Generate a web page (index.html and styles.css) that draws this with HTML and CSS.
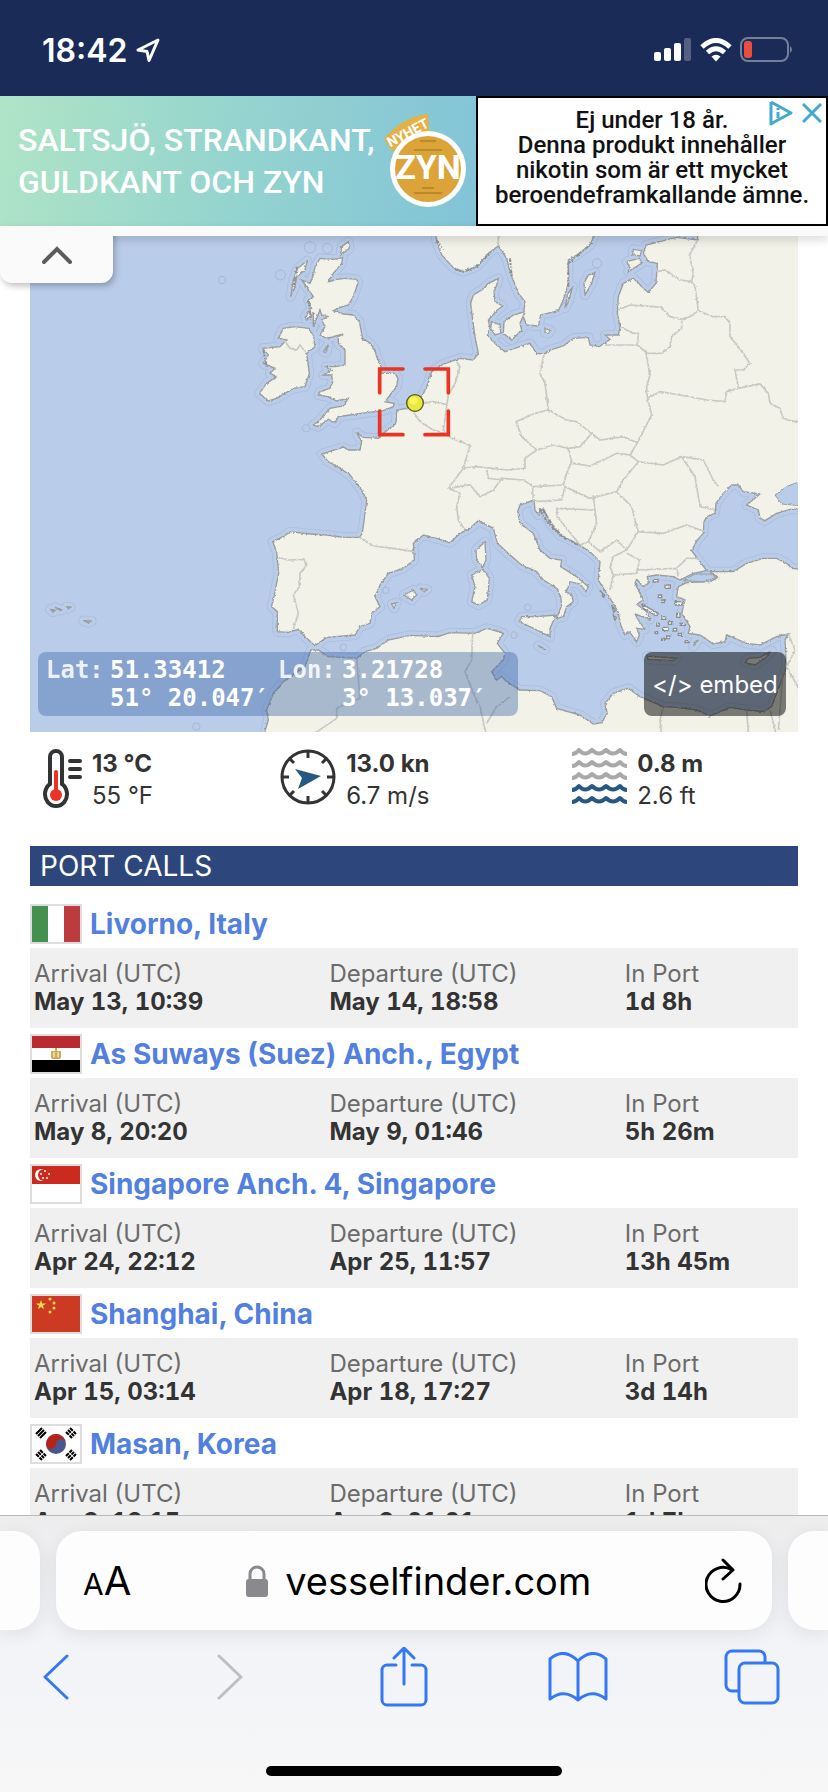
FILE: index.html
```
<!DOCTYPE html>
<html lang="en">
<head>
    <meta charset="UTF-8">
    <meta name="viewport" content="width=device-width, initial-scale=1.0">
    <title>Vessel position and port calls - VesselFinder</title>
    <link rel="stylesheet" href="styles.css">
</head>
<body>

    <!-- Status bar -->
    <header class="status-bar">
        <div class="status-left">
            <span class="clock">18:42</span>
            <svg width="26" height="26" viewBox="0 0 26 26"><path d="M23 3 L3 13 L12 14.500 L14 23.500 Z" fill="none" stroke="#fff" stroke-width="3" stroke-linejoin="round"/></svg>
        </div>
        <div class="status-right">
            <svg width="38" height="24" viewBox="0 0 38 24" fill="#fff">
                <rect x="0" y="14" width="7" height="9" rx="2"/>
                <rect x="10" y="10" width="7" height="13" rx="2"/>
                <rect x="20" y="5" width="7" height="18" rx="2"/>
                <rect x="30" y="0" width="7" height="23" rx="2" opacity=".25"/>
            </svg>
            <svg width="32" height="24" viewBox="0 0 32 24" fill="none" stroke="#fff" stroke-width="5">
                <path d="M2 9 Q16 -4 30 9"/>
                <path d="M7.500 14.500 Q16 7 24.500 14.500"/>
                <path d="M11.500 18.500 Q16 15 20.500 18.500 L16 23.500 Z" fill="#fff" stroke="none"/>
            </svg>
            <svg width="54" height="26" viewBox="0 0 54 26">
                <rect x="1" y="1" width="47" height="23" rx="7" fill="none" stroke="#fff" stroke-opacity=".4" stroke-width="2"/>
                <rect x="4" y="4" width="8" height="17" rx="3" fill="#ea4e3d"/>
                <path d="M50 9 Q54 12.500 50 16 Z" fill="#fff" fill-opacity=".4"/>
            </svg>
        </div>
    </header>

    <!-- Advert -->
    <aside class="ad">
        <div class="ad-left">
            <p>SALTSJÖ, STRANDKANT,<br>GULDKANT OCH ZYN</p>
            <svg class="can" width="88" height="96" viewBox="0 0 88 96">
                <path d="M4 26 Q22 4 48 1 L50 32 L12 38 Z" fill="#e5b044"/>
                <text x="30" y="24" class="can-tag" transform="rotate(-28 30 24)">NYHET</text>
                <circle cx="48" cy="56" r="38" fill="#fff"/>
                <circle cx="48" cy="56" r="33" fill="#dca338"/>
                <path d="M34 37 H62 M40 28 H56 M42 75 H54 M34 80 H62" stroke="#b98a2c" stroke-width="2"/>
                <text x="48" y="66" class="can-name">ZYN</text>
            </svg>
        </div>
        <div class="ad-right">
            <p>Ej under 18 år.<br>Denna produkt innehåller<br>nikotin som är ett mycket<br>beroendeframkallande ämne.</p>
            <div class="ad-marks">
                <svg width="24" height="26" viewBox="0 0 24 26" fill="none" stroke="#43a9ce" stroke-width="3" stroke-linejoin="round"><path d="M2 2 L22 13 L7 21 M2 2 V24 L7 21"/><path d="M9 8 V10 M9 12 V18"/></svg>
                <svg width="20" height="20" viewBox="0 0 20 20" stroke="#43a9ce" stroke-width="3"><path d="M1 1 L19 19 M19 1 L1 19"/></svg>
            </div>
        </div>
    </aside>

    <div class="ad-edge">
        <button class="ad-toggle" aria-label="Hide advert">
            <svg width="30" height="18" viewBox="0 0 30 18"><path d="M2 16 L15 3 L28 16" fill="none" stroke="#5c5c5c" stroke-width="4" stroke-linecap="round"/></svg>
        </button>
    </div>

    <main class="page">

        <!-- Map -->
        <div class="map">
            <svg class="map-art" viewBox="90 708 2304 1488" preserveAspectRatio="xMidYMid slice">
                <defs>
                    <filter id="rough" x="0" y="0" width="1" height="1">
                        <feTurbulence type="fractalNoise" baseFrequency=".12" numOctaves="3" seed="4"/>
                        <feDisplacementMap in="SourceGraphic" scale="8" xChannelSelector="R" yChannelSelector="G"/>
                    </filter>
                    <g id="land">
                        <!-- Europe -->
                        <path d="M2093 690 L2093 720 L2030 712 L1980 725 L1938 735 L1930 760 L1945 785 L1972 790 L1968 850 L1945 878 L1930 865 L1900 835 L1870 850 L1855 890 L1852 940 L1860 980 L1855 1005 L1815 1005 L1830 1018 L1798 1040 L1770 1035 L1765 1012 L1720 1015 L1690 1038 L1650 1050 L1632 1062 L1610 1060 L1590 1030 L1560 1040 L1515 1055 L1490 1035 L1462 1005 L1470 985 L1465 960 L1492 930 L1508 918 L1485 905 L1482 875 L1492 850 L1495 835 L1470 848 L1445 870 L1420 885 L1412 910 L1418 960 L1425 1010 L1435 1060 L1420 1080 L1380 1075 L1330 1092 L1295 1115 L1285 1150 L1268 1185 L1220 1225 L1190 1230 L1188 1270 L1150 1300 L1135 1315 L1090 1312 L1070 1298 L1085 1325 L1080 1350 L1045 1350 L1030 1341 L965 1362 L985 1385 L1020 1405 L1050 1425 L1070 1450 L1085 1470 L1100 1500 L1095 1540 L1087 1600 L1078 1612 L1030 1612 L980 1605 L930 1602 L870 1595 L850 1610 L818 1625 L830 1655 L836 1720 L822 1790 L815 1820 L832 1835 L832 1895 L865 1897 L895 1888 L915 1910 L945 1937 L980 1912 L1065 1905 L1080 1880 L1110 1870 L1115 1840 L1140 1820 L1125 1790 L1140 1755 L1165 1720 L1210 1705 L1243 1680 L1240 1630 L1270 1605 L1310 1615 L1350 1628 L1380 1600 L1410 1585 L1435 1562 L1480 1585 L1492 1630 L1530 1665 L1565 1695 L1610 1715 L1630 1740 L1670 1765 L1682 1790 L1685 1815 L1670 1855 L1690 1850 L1700 1820 L1720 1805 L1715 1785 L1698 1775 L1710 1745 L1740 1752 L1758 1775 L1765 1760 L1730 1730 L1682 1700 L1685 1680 L1650 1675 L1620 1650 L1600 1600 L1560 1570 L1553 1535 L1560 1515 L1602 1500 L1605 1530 L1615 1545 L1630 1525 L1650 1570 L1680 1605 L1730 1630 L1770 1655 L1800 1685 L1795 1740 L1820 1780 L1840 1810 L1855 1838 L1862 1875 L1875 1905 L1888 1895 L1910 1925 L1918 1905 L1910 1885 L1935 1888 L1915 1860 L1905 1842 L1950 1858 L1940 1835 L1910 1812 L1930 1800 L1920 1780 L1905 1750 L1910 1738 L1930 1760 L1945 1750 L1942 1730 L1970 1725 L2020 1730 L2040 1740 L2080 1720 L2120 1712 L2092 1675 L2075 1652 L2092 1620 L2110 1600 L2112 1565 L2120 1550 L2145 1540 L2148 1510 L2170 1480 L2195 1455 L2215 1455 L2230 1475 L2280 1482 L2240 1515 L2275 1530 L2280 1555 L2295 1562 L2330 1540 L2370 1528 L2410 1528 L2410 690 Z"/>
                        <!-- Scandinavia -->
                        <path d="M1305 690 L1310 725 L1325 765 L1360 803 L1390 815 L1430 800 L1465 760 L1495 738 L1520 775 L1530 815 L1555 880 L1575 905 L1570 950 L1580 975 L1615 978 L1622 945 L1675 932 L1690 900 L1705 850 L1705 780 L1730 765 L1770 735 L1790 690 Z"/>
                        <!-- Turkey and North Africa -->
                        <path d="M2410 1708 L2375 1705 L2360 1690 L2330 1675 L2290 1675 L2240 1690 L2200 1715 L2130 1715 L2155 1733 L2130 1745 L2060 1748 L2035 1760 L2030 1790 L2055 1800 L2045 1840 L2070 1880 L2065 1900 L2100 1905 L2140 1932 L2175 1925 L2180 1905 L2240 1930 L2280 1935 L2330 1910 L2365 1902 L2355 1920 L2358 1980 L2360 2000 L2330 2080 L2315 2120 L2290 2135 L2240 2130 L2190 2122 L2130 2148 L2090 2130 L2030 2122 L1990 2120 L1920 2090 L1885 2065 L1840 2080 L1815 2110 L1822 2140 L1805 2168 L1780 2172 L1740 2145 L1670 2125 L1655 2090 L1620 2072 L1560 2070 L1520 2045 L1505 2030 L1490 2040 L1475 2015 L1510 1980 L1515 1960 L1492 1930 L1510 1900 L1480 1890 L1460 1885 L1425 1900 L1350 1898 L1315 1910 L1230 1906 L1165 1920 L1130 1945 L1095 1955 L1070 1975 L985 1970 L955 1950 L932 1950 L915 2000 L850 2045 L820 2080 L800 2130 L805 2160 L790 2210 L2410 2210 Z"/>
                        <!-- Great Britain and Ireland -->
                        <path d="M960 775 L1000 778 L1028 773 L1025 790 L1000 820 L985 845 L1010 838 L1040 835 L1070 838 L1074 848 L1060 890 L1045 915 L1020 922 L1000 932 L1030 942 L1060 945 L1078 965 L1088 1015 L1110 1030 L1125 1050 L1130 1070 L1142 1095 L1145 1120 L1185 1120 L1194 1135 L1190 1160 L1170 1185 L1155 1205 L1182 1210 L1180 1220 L1150 1232 L1100 1238 L1050 1245 L1015 1250 L1005 1268 L985 1258 L955 1280 L940 1275 L960 1260 L990 1225 L1030 1218 L1045 1195 L1010 1203 L985 1190 L955 1185 L960 1175 L990 1165 L998 1145 L995 1125 L970 1125 L995 1110 L978 1100 L1005 1100 L1035 1095 L1035 1050 L1015 1030 L1015 1010 L1030 1002 L980 1015 L960 1005 L975 980 L965 960 L985 950 L965 945 L960 930 L940 980 L940 940 L920 960 L915 950 L935 925 L925 900 L940 890 L905 840 L930 850 L940 825 L945 800 Z"/>
                        <path d="M925 985 L940 1005 L945 1040 L920 1060 L928 1120 L915 1160 L880 1165 L830 1195 L805 1203 L778 1180 L800 1150 L830 1130 L810 1120 L825 1105 L790 1090 L805 1065 L788 1045 L840 1040 L860 1020 L835 1015 L850 985 L885 980 Z"/>
                        <!-- Islands -->
                        <path d="M922 782 L915 810 L890 830 L885 860 L872 890 L880 840 L893 805 Z"/>
                        <path d="M1045 725 L1048 745 L1022 765 L1025 740 Z"/>
                        <path d="M985 1035 L978 1058 L970 1055 Z"/>
                        <path d="M1575 935 L1560 970 L1565 990 L1535 1020 L1510 1000 L1512 965 L1540 945 Z"/>
                        <path d="M1475 965 L1500 975 L1502 1000 L1485 1005 L1472 985 Z"/>
                        <path d="M1635 985 L1652 992 L1645 1000 L1635 998 Z"/>
                        <path d="M1785 818 L1775 850 L1755 885 L1752 850 L1765 825 Z"/>
                        <path d="M1718 860 L1705 905 L1695 925 L1702 885 Z"/>
                        <path d="M1900 748 L1925 752 L1920 768 L1898 765 Z"/>
                        <path d="M1880 785 L1918 775 L1925 790 L1885 815 L1888 800 Z"/>
                        <path d="M1455 1625 L1458 1680 L1448 1702 L1430 1680 L1428 1650 Z"/>
                        <path d="M1450 1708 L1468 1735 L1462 1800 L1435 1815 L1415 1805 L1425 1760 L1415 1725 Z"/>
                        <path d="M1668 1845 L1650 1885 L1650 1910 L1600 1885 L1558 1865 L1565 1850 L1610 1850 Z"/>
                        <path d="M1212 1785 L1240 1770 L1250 1785 L1235 1800 Z"/>
                        <path d="M1175 1812 L1190 1808 L1182 1825 Z"/>
                        <path d="M1262 1765 L1282 1768 L1272 1775 Z"/>
                        <path d="M1940 1968 L2030 1975 L2020 1982 L1945 1978 Z"/>
                        <path d="M2315 1952 L2295 1975 L2265 1995 L2235 1988 L2245 1975 L2280 1972 Z"/>
                        <path d="M1615 1937 L1630 1945 L1635 1950 Z"/>
                        <path d="M2095 1920 L2080 1940 L2085 1925 Z"/>
                        <path d="M250 1862 L275 1863 L265 1868 Z M150 1828 L165 1832 L160 1836 Z M200 1820 L212 1822 L206 1826 Z M165 1822 L185 1830 L180 1832 Z"/>
                    </g>
                </defs>
                <rect x="90" y="708" width="2304" height="1488" fill="#b9cce9"/>
                <use href="#land" fill="none" stroke="#adbdd9" stroke-width="30" stroke-linejoin="round"/>
                <use href="#land" fill="none" stroke="#b9cce9" stroke-width="25" stroke-linejoin="round"/>
                <g filter="url(#rough)">
                    <use href="#land" fill="#f2f2e9" stroke="#9a9c9e" stroke-width="4"/>
                    <g fill="#b9cce9" stroke="#9a9c9e" stroke-width="3">
                        <!-- Azov and Marmara -->
                        <path d="M2410 1440 L2360 1460 L2325 1485 L2345 1512 L2410 1518 Z"/>
                        <path d="M2050 1742 L2085 1722 L2130 1722 L2150 1732 L2110 1745 Z"/>
                    </g>
                    <!-- Borders -->
                    <g fill="none" stroke="#c9c9c4" stroke-width="5">
                        <path d="M852 1020 L870 1045 L890 1050 L900 1035 L915 1055"/>
                        <path d="M1495 690 L1495 738"/>
                        <path d="M1970 815 L1995 810 L2040 840 L2075 845 L2080 820 L2068 765 L2093 720"/>
                        <path d="M1855 930 L1890 915 L1960 920 L1985 922 L2010 950 L2045 958 L2070 950 L2095 932 L2085 860 L2070 840"/>
                        <path d="M1860 980 L1900 1000 L1915 1000 L1912 1035 L1815 1035 M1912 1035 L1942 1060 L1985 1060 L2010 1040 L2015 1010 L2045 985 L2045 958"/>
                        <path d="M2095 932 L2140 950 L2175 950 L2190 970 L2190 1010 L2215 1040 L2250 1090 L2230 1110 L2205 1110 L2215 1165 L2180 1175 L2175 1205 L2120 1200 L2040 1185 L1980 1175 L1942 1195 L1940 1160 L1950 1125 L1938 1060"/>
                        <path d="M2215 1165 L2280 1152 L2305 1180 L2310 1210 L2340 1225 L2350 1255 L2380 1265 L2410 1262"/>
                        <path d="M1632 1062 L1620 1120 L1635 1150 L1645 1230 L1700 1260 L1730 1265 L1775 1300 L1800 1320 L1870 1310 L1912 1328 L1955 1245 L1942 1195"/>
                        <path d="M1645 1230 L1605 1240 L1548 1265 L1565 1310 L1610 1350 L1660 1335 L1705 1345 L1740 1340 L1775 1300"/>
                        <path d="M1610 1350 L1575 1375 L1575 1405 L1520 1410 L1430 1400 L1390 1405 L1410 1335 L1355 1315 L1330 1290 L1345 1185 L1365 1150 L1380 1100 L1370 1085"/>
                        <path d="M1230 1220 L1260 1265 L1300 1290 L1335 1300 M1268 1210 L1300 1205 L1345 1215"/>
                        <path d="M1390 1405 L1345 1465 L1380 1480 L1370 1520 L1375 1560 L1395 1590"/>
                        <path d="M1345 1465 L1410 1455 L1440 1490 L1480 1470 L1505 1435 L1570 1440 L1600 1460 L1690 1455 L1700 1420 L1715 1385 L1705 1345 M1460 1410 L1465 1435 L1510 1440"/>
                        <path d="M1718 1390 L1770 1398 L1820 1375 L1850 1360 L1890 1365 L1915 1385 L1870 1440 L1850 1475 L1770 1495 L1695 1460 L1685 1500 L1600 1505 L1598 1460 M1890 1365 L1912 1328"/>
                        <path d="M1915 1385 L1990 1395 L2045 1370 L2085 1430 L2100 1520 L2145 1530 M2045 1370 L2110 1380 L2140 1440 L2155 1460"/>
                        <path d="M1850 1475 L1895 1520 L1910 1580 L1915 1595 L1990 1600 L2060 1575 L2115 1595"/>
                        <path d="M1670 1525 L1785 1530 L1790 1570 L1765 1625 L1740 1635 L1672 1550 Z M1785 1530 L1780 1485"/>
                        <path d="M1765 1625 L1800 1655 L1850 1620 L1880 1650 L1840 1670 L1830 1700 L1840 1725 L1910 1720 L1918 1680 L1880 1660 M1915 1595 L1880 1650 M1840 1725 L1830 1770 M1910 1710 L2030 1705 L2060 1675 L2092 1675 M2030 1705 L2035 1730"/>
                        <path d="M1078 1612 L1120 1638 L1180 1645 L1243 1655"/>
                        <path d="M836 1672 L865 1680 L910 1678 L920 1695 L900 1720 L898 1760 L880 1785 L895 1840 L880 1888"/>
                        <path d="M1070 1975 L1080 2095 L1010 2125 L1010 2155 L950 2196"/>
                        <path d="M1418 1900 L1415 1980 L1395 2015 L1420 2080 L1440 2120 L1460 2210 M1460 2170 L1490 2120 L1530 2090"/>
                        <path d="M1990 2120 L1980 2160 L1985 2210 M2310 2130 L2330 2210 M2350 2000 L2335 2190 M2240 2130 L2245 2196 M2365 1902 L2385 1950 L2360 2000 L2410 2090"/>
                    </g>
                    <!-- Islets off Croatia, in the Aegean and by the Swedish skerries -->
                    <g fill="none" stroke="#8c8e90" stroke-width="6" stroke-dasharray="11 3 6 4 3 7">
                        <path d="M1618 1525 L1640 1565 L1680 1605 L1740 1638 M1630 1530 L1660 1580 L1700 1620"/>
                        <path d="M1530 775 L1535 830 M1705 860 L1705 790 L1735 765 L1775 730 M1310 720 L1330 750 M1365 808 L1390 815 L1430 800 L1480 750"/>
                        <path d="M925 900 L935 970 M890 800 L880 870 M790 1050 L800 1100"/>
                    </g>
                    <g fill="#f2f2e9" stroke="#8c8e90" stroke-width="4">
                        <path d="M1960 1738 h14 v8 h-14 Z M1995 1755 h16 v10 h-16 Z M1975 1785 h10 v8 h-10 Z M2025 1805 h22 v10 h-20 Z M2030 1840 h10 v12 h-10 Z M1985 1800 h8 v8 h-8 Z"/>
                        <path d="M1925 1812 L1975 1840 L1970 1848 L1930 1825 Z M1985 1850 h12 v8 h-12 Z M2005 1865 h10 v8 h-10 Z M1970 1870 h8 v8 h-8 Z M1990 1882 h14 v10 h-14 Z M2020 1885 h10 v8 h-10 Z M1965 1895 h8 v6 h-8 Z"/>
                        <path d="M2000 1908 h10 v8 h-10 Z M2035 1900 h12 v6 h-12 Z M1985 1915 h8 v6 h-8 Z M2040 1870 h16 v6 h-16 Z M2055 1922 h10 v6 h-10 Z M1835 1815 l12 16 l-6 6 Z M1840 1845 l10 8 l-6 6 Z M1800 1772 l14 14 l-4 6 Z"/>
                    </g>
                </g>
                <!-- Islands' offshore rings -->
                <g fill="none" stroke="#a9b9d3" stroke-width="3">
                    <circle cx="666" cy="840" r="11"/><circle cx="841" cy="825" r="15"/><circle cx="930" cy="742" r="17"/><circle cx="982" cy="745" r="15"/>
                    <circle cx="918" cy="1285" r="11"/><circle cx="1157" cy="1771" r="10"/><circle cx="1030" cy="1942" r="10"/><circle cx="589" cy="2180" r="11"/>
                    <circle cx="1583" cy="1822" r="10"/><circle cx="1791" cy="790" r="14"/><circle cx="1542" cy="1905" r="10"/>
                </g>
                <!-- Vessel marker -->
                <path d="M1209 1107 H1139 V1178 M1139 1233 V1304 H1209 M1275 1107 H1345 V1178 M1345 1233 V1304 H1275" fill="none" stroke="#ea3323" stroke-width="11" stroke-linecap="round"/>
                <circle cx="1245" cy="1209" r="25" fill="#e8e840" stroke="#55551c" stroke-width="4"/>
                <circle cx="1240" cy="1202" r="12" fill="#f7f75c"/>
            </svg>

            <div class="coords">
                <span class="coord-name">Lat:</span>
                <span>51.33412<br>51° 20.047′</span>
                <span class="coord-name">Lon:</span>
                <span>3.21728<br>3° 13.037′</span>
            </div>
            <button class="embed">&lt;/&gt; embed</button>
        </div>

        <!-- Weather -->
        <div class="weather">
            <div class="weather-item">
                <svg width="42" height="62" viewBox="0 0 42 62">
                    <path d="M8 9 a6 6 0 0 1 12 0 V36 a11 12 0 1 1 -12 0 Z" fill="#fff" stroke="#313335" stroke-width="4"/>
                    <path d="M14 24 V46" stroke="#ea3323" stroke-width="4" stroke-linecap="round"/>
                    <circle cx="14" cy="47" r="6" fill="#ea3323"/>
                    <path d="M28 13 H38 M28 21 H38 M28 29 H38" stroke="#313335" stroke-width="4" stroke-linecap="round"/>
                </svg>
                <p><b>13 °C</b><br>55 °F</p>
            </div>
            <div class="weather-item">
                <svg width="58" height="62" viewBox="0 0 58 62">
                    <circle cx="28" cy="29" r="26" fill="none" stroke="#313335" stroke-width="3"/>
                    <path d="M28 3 V10 M28 48 V55 M2 29 H9 M47 29 H54 M10 11 L14 15 M42 43 L46 47 M46 11 L42 15 M14 43 L10 47" stroke="#313335" stroke-width="3"/>
                    <path d="M15 21 L41 28 L18 41 L22 30 Z" fill="#265882"/>
                </svg>
                <p><b>13.0 kn</b><br>6.7 m/s</p>
            </div>
            <div class="weather-item">
                <svg width="58" height="62" viewBox="0 0 58 62" fill="none" stroke="#a9a9a9" stroke-width="4" stroke-linejoin="round">
                    <path id="wave" d="M1 6 Q5 6 8 2 Q14 9 21 2 Q28 9 35 2 Q42 9 49 2 Q52 6 56 6"/>
                    <use href="#wave" y="12"/>
                    <use href="#wave" y="24"/>
                    <g stroke="#265882"><use href="#wave" y="36"/><use href="#wave" y="48"/></g>
                </svg>
                <p><b>0.8 m</b><br>2.6 ft</p>
            </div>
        </div>

        <!-- Port calls -->
        <h2>PORT CALLS</h2>
        <section class="calls">
            <article class="call">
                <h3>
                    <svg class="flag" viewBox="0 0 48 36"><path fill="#fff" d="M0 0H48V36H0Z"/><path fill="#45904f" d="M0 0H16V36H0Z"/><path fill="#bb3b3e" d="M32 0H48V36H32Z"/></svg>
                    <a href="#">Livorno, Italy</a>
                </h3>
                <dl>
                    <div><dt>Arrival (UTC)</dt><dd>May 13, 10:39</dd></div>
                    <div><dt>Departure (UTC)</dt><dd>May 14, 18:58</dd></div>
                    <div><dt>In Port</dt><dd>1d 8h</dd></div>
                </dl>
            </article>
            <article class="call">
                <h3>
                    <svg class="flag" viewBox="0 0 48 36"><path fill="#fff" d="M0 0H48V36H0Z"/><path fill="#ba2b31" d="M0 0H48V12H0Z"/><path d="M0 24H48V36H0Z"/><path fill="#cfae53" d="M23 12h2v3h4v6l-1 2H20l-1-2v-6h4Z"/><path stroke="#fff" stroke-width="1" d="M22 16v5M26 16v5"/></svg>
                    <a href="#">As Suways (Suez) Anch., Egypt</a>
                </h3>
                <dl>
                    <div><dt>Arrival (UTC)</dt><dd>May 8, 20:20</dd></div>
                    <div><dt>Departure (UTC)</dt><dd>May 9, 01:46</dd></div>
                    <div><dt>In Port</dt><dd>5h 26m</dd></div>
                </dl>
            </article>
            <article class="call">
                <h3>
                    <svg class="flag" viewBox="0 0 48 36"><path fill="#fff" d="M0 0H48V36H0Z"/><path fill="#cb2b1e" d="M0 0H48V18H0Z"/><circle cx="9" cy="9" r="6" fill="#fff"/><circle cx="12" cy="9" r="6" fill="#cb2b1e"/><g fill="#fff"><circle cx="13" cy="5" r="1"/><circle cx="9" cy="8" r="1"/><circle cx="17" cy="8" r="1"/><circle cx="11" cy="12" r="1"/><circle cx="15" cy="12" r="1"/></g></svg>
                    <a href="#">Singapore Anch. 4, Singapore</a>
                </h3>
                <dl>
                    <div><dt>Arrival (UTC)</dt><dd>Apr 24, 22:12</dd></div>
                    <div><dt>Departure (UTC)</dt><dd>Apr 25, 11:57</dd></div>
                    <div><dt>In Port</dt><dd>13h 45m</dd></div>
                </dl>
            </article>
            <article class="call">
                <h3>
                    <svg class="flag" viewBox="0 0 48 36"><path fill="#cc3a24" d="M0 0H48V36H0Z"/><g fill="#f9dc4b"><path d="M9 4l1.200 3.500h3.800l-3 2.200 1.100 3.600L9 11.100l-3.100 2.200L7 9.700 4 7.500h3.800Z"/><circle cx="18" cy="3" r="1.500"/><circle cx="22" cy="7" r="1.500"/><circle cx="22" cy="12" r="1.500"/><circle cx="18" cy="16" r="1.500"/></g></svg>
                    <a href="#">Shanghai, China</a>
                </h3>
                <dl>
                    <div><dt>Arrival (UTC)</dt><dd>Apr 15, 03:14</dd></div>
                    <div><dt>Departure (UTC)</dt><dd>Apr 18, 17:27</dd></div>
                    <div><dt>In Port</dt><dd>3d 14h</dd></div>
                </dl>
            </article>
            <article class="call">
                <h3>
                    <svg class="flag" viewBox="0 0 48 36"><path fill="#fff" d="M0 0H48V36H0Z"/><circle cx="24" cy="18" r="10" fill="#47568f"/><path fill="#b82318" d="M14 18a10 10 0 0 1 20 0a5 5 0 0 0-10 0a5 5 0 0 1-10 0Z"/><g stroke="#000" stroke-width="2"><path d="M4 8l6-6M6 10l6-6M8 12l6-6"/><path stroke-dasharray="4 1" d="M34 6l6 6M36 4l6 6M38 2l6 6"/><path stroke-dasharray="4 1" d="M4 28l6 6M6 26l6 6M8 24l6 6"/><path stroke-dasharray="4 1" d="M34 30l6-6M36 32l6-6M38 34l6-6"/></g></svg>
                    <a href="#">Masan, Korea</a>
                </h3>
                <dl>
                    <div><dt>Arrival (UTC)</dt><dd>Apr 2, 19:15</dd></div>
                    <div><dt>Departure (UTC)</dt><dd>Apr 9, 01:01</dd></div>
                    <div><dt>In Port</dt><dd>1d 7h</dd></div>
                </dl>
            </article>
        </section>
    </main>

    <!-- Browser controls -->
    <footer class="browser">
        <div class="tabs">
            <div class="tab-peek"></div>
            <div class="address">
                <button class="text-size" aria-label="Page settings"><small>A</small>A</button>
                <div class="site">
                    <svg width="24" height="34" viewBox="0 0 24 34"><path d="M5 17 V10 a7 7 0 0 1 14 0 V17" fill="none" stroke="#8a8a8e" stroke-width="3"/><rect x="1" y="15" width="22" height="18" rx="3" fill="#8a8a8e"/></svg>
                    <span>vesselfinder.com</span>
                </div>
                <button aria-label="Reload">
                    <svg width="38" height="46" viewBox="0 0 38 46" fill="none" stroke="#000" stroke-width="3" stroke-linecap="round" stroke-linejoin="round"><path d="M35 26 A17 17 0 1 1 27 12"/><path d="M18 2 L28 12 L18 21"/></svg>
                </button>
            </div>
            <div class="tab-peek"></div>
        </div>
        <nav class="toolbar">
            <button aria-label="Back"><svg width="28" height="46" viewBox="0 0 28 46"><path d="M25 2 L3 23 L25 44"/></svg></button>
            <button aria-label="Forward" disabled><svg width="28" height="46" viewBox="0 0 28 46"><path d="M3 2 L25 23 L3 44"/></svg></button>
            <button aria-label="Share"><svg width="48" height="60" viewBox="0 0 48 60"><path d="M16 18 H7 a5 5 0 0 0 -5 5 V53 a5 5 0 0 0 5 5 H41 a5 5 0 0 0 5 -5 V23 a5 5 0 0 0 -5 -5 H32 M24 37 V2 M14 11 L24 1 L34 11"/></svg></button>
            <button aria-label="Bookmarks"><svg width="60" height="50" viewBox="0 0 60 50"><path d="M30 9 Q16 -5 2 7 V47 Q16 36 30 48 Q44 36 58 47 V7 Q44 -5 30 9 V48"/></svg></button>
            <button aria-label="Tabs"><svg width="56" height="56" viewBox="0 0 56 56"><rect x="15" y="14" width="39" height="40" rx="6"/><path d="M14 42 H8 a6 6 0 0 1 -6 -6 V8 a6 6 0 0 1 6 -6 H35 a6 6 0 0 1 6 6 V13"/></svg></button>
        </nav>
        <div class="home-bar"></div>
    </footer>

</body>
</html>
```

FILE: styles.css
```
* {
    box-sizing: border-box;
}
body {
    font-family: Inter, "Liberation Sans", sans-serif;
    margin: 0;
    height: 100vh;
    display: flex;
    flex-direction: column;
    overflow: hidden;
    background-color: #fff;
    color: #333;
}
p, h2, h3, dl, dd {
    margin: 0;
}
button {
    font-family: inherit;
    border: none;
    background: none;
    padding: 0;
    cursor: pointer;
}
svg {
    display: block;
    flex-shrink: 0;
}
/* Status bar */
.status-bar {
    display: flex;
    flex-shrink: 0;
    justify-content: space-between;
    align-items: center;
    height: 96px;
    padding: 4px 34px 0 42px;
    background-color: #1a2b57;
    color: #fff;
}
.status-left, .status-right {
    display: flex;
    align-items: center;
    gap: 8px;
}
.clock {
    font-size: 32px;
    font-weight: 600;
}
/* Advert */
.ad {
    display: flex;
    flex-shrink: 0;
    height: 130px;
    font-family: "Liberation Sans Narrow", Roboto, sans-serif;
}
.ad-left {
    display: flex;
    align-items: center;
    justify-content: space-between;
    width: 476px;
    padding: 0 8px 0 18px;
    background: linear-gradient(100deg, #afe4c6, #94d4cf 50%, #82c3d8);
    color: #fff;
    font-size: 32px;
    font-weight: 500;
    line-height: 42px;
    white-space: nowrap;
}
.can-tag {
    font: bold 14px Roboto, sans-serif;
    fill: #fff;
    text-anchor: middle;
}
.can-name {
    font: bold 34px Roboto, sans-serif;
    fill: #fff;
    text-anchor: middle;
}
.ad-right {
    position: relative;
    flex: 1;
    padding-top: 10px;
    border: 2px solid #000;
    background-color: #fff;
    color: #111;
    font-size: 24px;
    font-weight: 500;
    line-height: 25px;
    text-align: center;
    white-space: nowrap;
}
.ad-marks {
    position: absolute;
    top: 2px;
    right: 4px;
    display: flex;
    align-items: center;
    gap: 9px;
}
.ad-edge {
    position: relative;
    z-index: 2;
    flex-shrink: 0;
    height: 10px;
    background-color: #fafafa;
    box-shadow: 0 4px 10px rgba(0, 0, 0, 0.15);
}
.ad-toggle {
    position: absolute;
    top: 0;
    left: 0;
    display: flex;
    align-items: center;
    justify-content: center;
    width: 113px;
    height: 57px;
    border-radius: 0 0 12px 12px;
    background-color: #fafafa;
    box-shadow: 2px 3px 6px rgba(0, 0, 0, 0.25);
    clip-path: inset(10px -10px -10px 0);
}
/* Page */
.page {
    flex: 1;
    min-height: 0;
    overflow: hidden;
    padding: 0 30px;
}
.map {
    position: relative;
    height: 496px;
    overflow: hidden;
}
.map-art {
    width: 100%;
    height: 100%;
}
.coords {
    position: absolute;
    left: 8px;
    bottom: 16px;
    display: grid;
    grid-template-columns: 64px 168px 64px auto;
    width: 480px;
    height: 64px;
    padding: 4px 8px;
    border-radius: 8px;
    background-color: rgba(58, 101, 165, 0.4);
    color: #fff;
    font: bold 24px/28px "DejaVu Sans Mono", monospace;
    white-space: nowrap;
}
.coord-name {
    opacity: 0.85;
}
.embed {
    position: absolute;
    right: 12px;
    bottom: 16px;
    width: 142px;
    height: 64px;
    border-radius: 8px;
    background-color: rgba(0, 0, 0, 0.5);
    color: #fff;
    font-size: 24px;
}
/* Weather */
.weather {
    display: grid;
    grid-template-columns: 63fr 77fr 60fr;
    height: 114px;
    padding: 16px 0 0 12px;
    font-size: 24px;
    line-height: 32px;
}
.weather-item {
    display: flex;
    gap: 8px;
}
/* Port calls */
h2 {
    height: 40px;
    padding-left: 10px;
    background-color: #2d477d;
    color: #fff;
    font-size: 28px;
    font-weight: 400;
    line-height: 40px;
}
.calls {
    padding-top: 12px;
}
h3 {
    display: flex;
    align-items: center;
    gap: 8px;
    height: 50px;
    padding-top: 2px;
    font-size: 28px;
    font-weight: 700;
}
h3 a {
    color: #5280df;
    text-decoration: none;
}
.flag {
    width: 52px;
    height: 40px;
    border: 2px solid #ddd;
}
dl {
    display: grid;
    grid-template-columns: 5fr 5fr 3fr;
    height: 80px;
    padding-top: 12px;
    background-color: #f0f0f0;
    font-size: 24px;
    line-height: 28px;
}
dl div {
    padding-left: 4px;
}
dt {
    color: #6b6b6b;
}
dd {
    font-weight: 700;
    font-variant-numeric: tabular-nums;
}
/* Browser controls */
.browser {
    flex-shrink: 0;
    height: 277px;
    border-top: 1px solid #b8b9bb;
    background: linear-gradient(#ededee, #f2f4f8 50%, #f7f7f7);
}
.tabs {
    display: flex;
    gap: 16px;
    padding-top: 15px;
}
.tab-peek, .address {
    height: 99px;
    background-color: #fdfdfe;
    box-shadow: 0 4px 20px rgba(0, 0, 0, 0.08);
}
.tab-peek {
    width: 40px;
    border-radius: 0 26px 26px 0;
}
.tab-peek:last-child {
    border-radius: 26px 0 0 26px;
}
.address {
    flex: 1;
    display: flex;
    align-items: center;
    justify-content: space-between;
    padding: 0 29px 0 27px;
    border-radius: 26px;
    color: #000;
}
.text-size {
    color: #000;
    font-size: 40px;
}
.text-size small {
    font-size: 30px;
}
.site {
    display: flex;
    align-items: center;
    gap: 16px;
    font-size: 38px;
}
.toolbar {
    display: flex;
    justify-content: space-between;
    align-items: center;
    height: 60px;
    margin-top: 17px;
    padding: 0 46px 0 26px;
}
.toolbar button {
    display: flex;
    justify-content: center;
    width: 60px;
}
.toolbar svg {
    fill: none;
    stroke: #3478f6;
    stroke-width: 3;
    stroke-linecap: round;
    stroke-linejoin: round;
}
.toolbar button:disabled svg {
    stroke: #bfbfbf;
}
.home-bar {
    width: 296px;
    height: 10px;
    margin: 59px auto 0;
    border-radius: 5px;
    background-color: #000;
}
```
